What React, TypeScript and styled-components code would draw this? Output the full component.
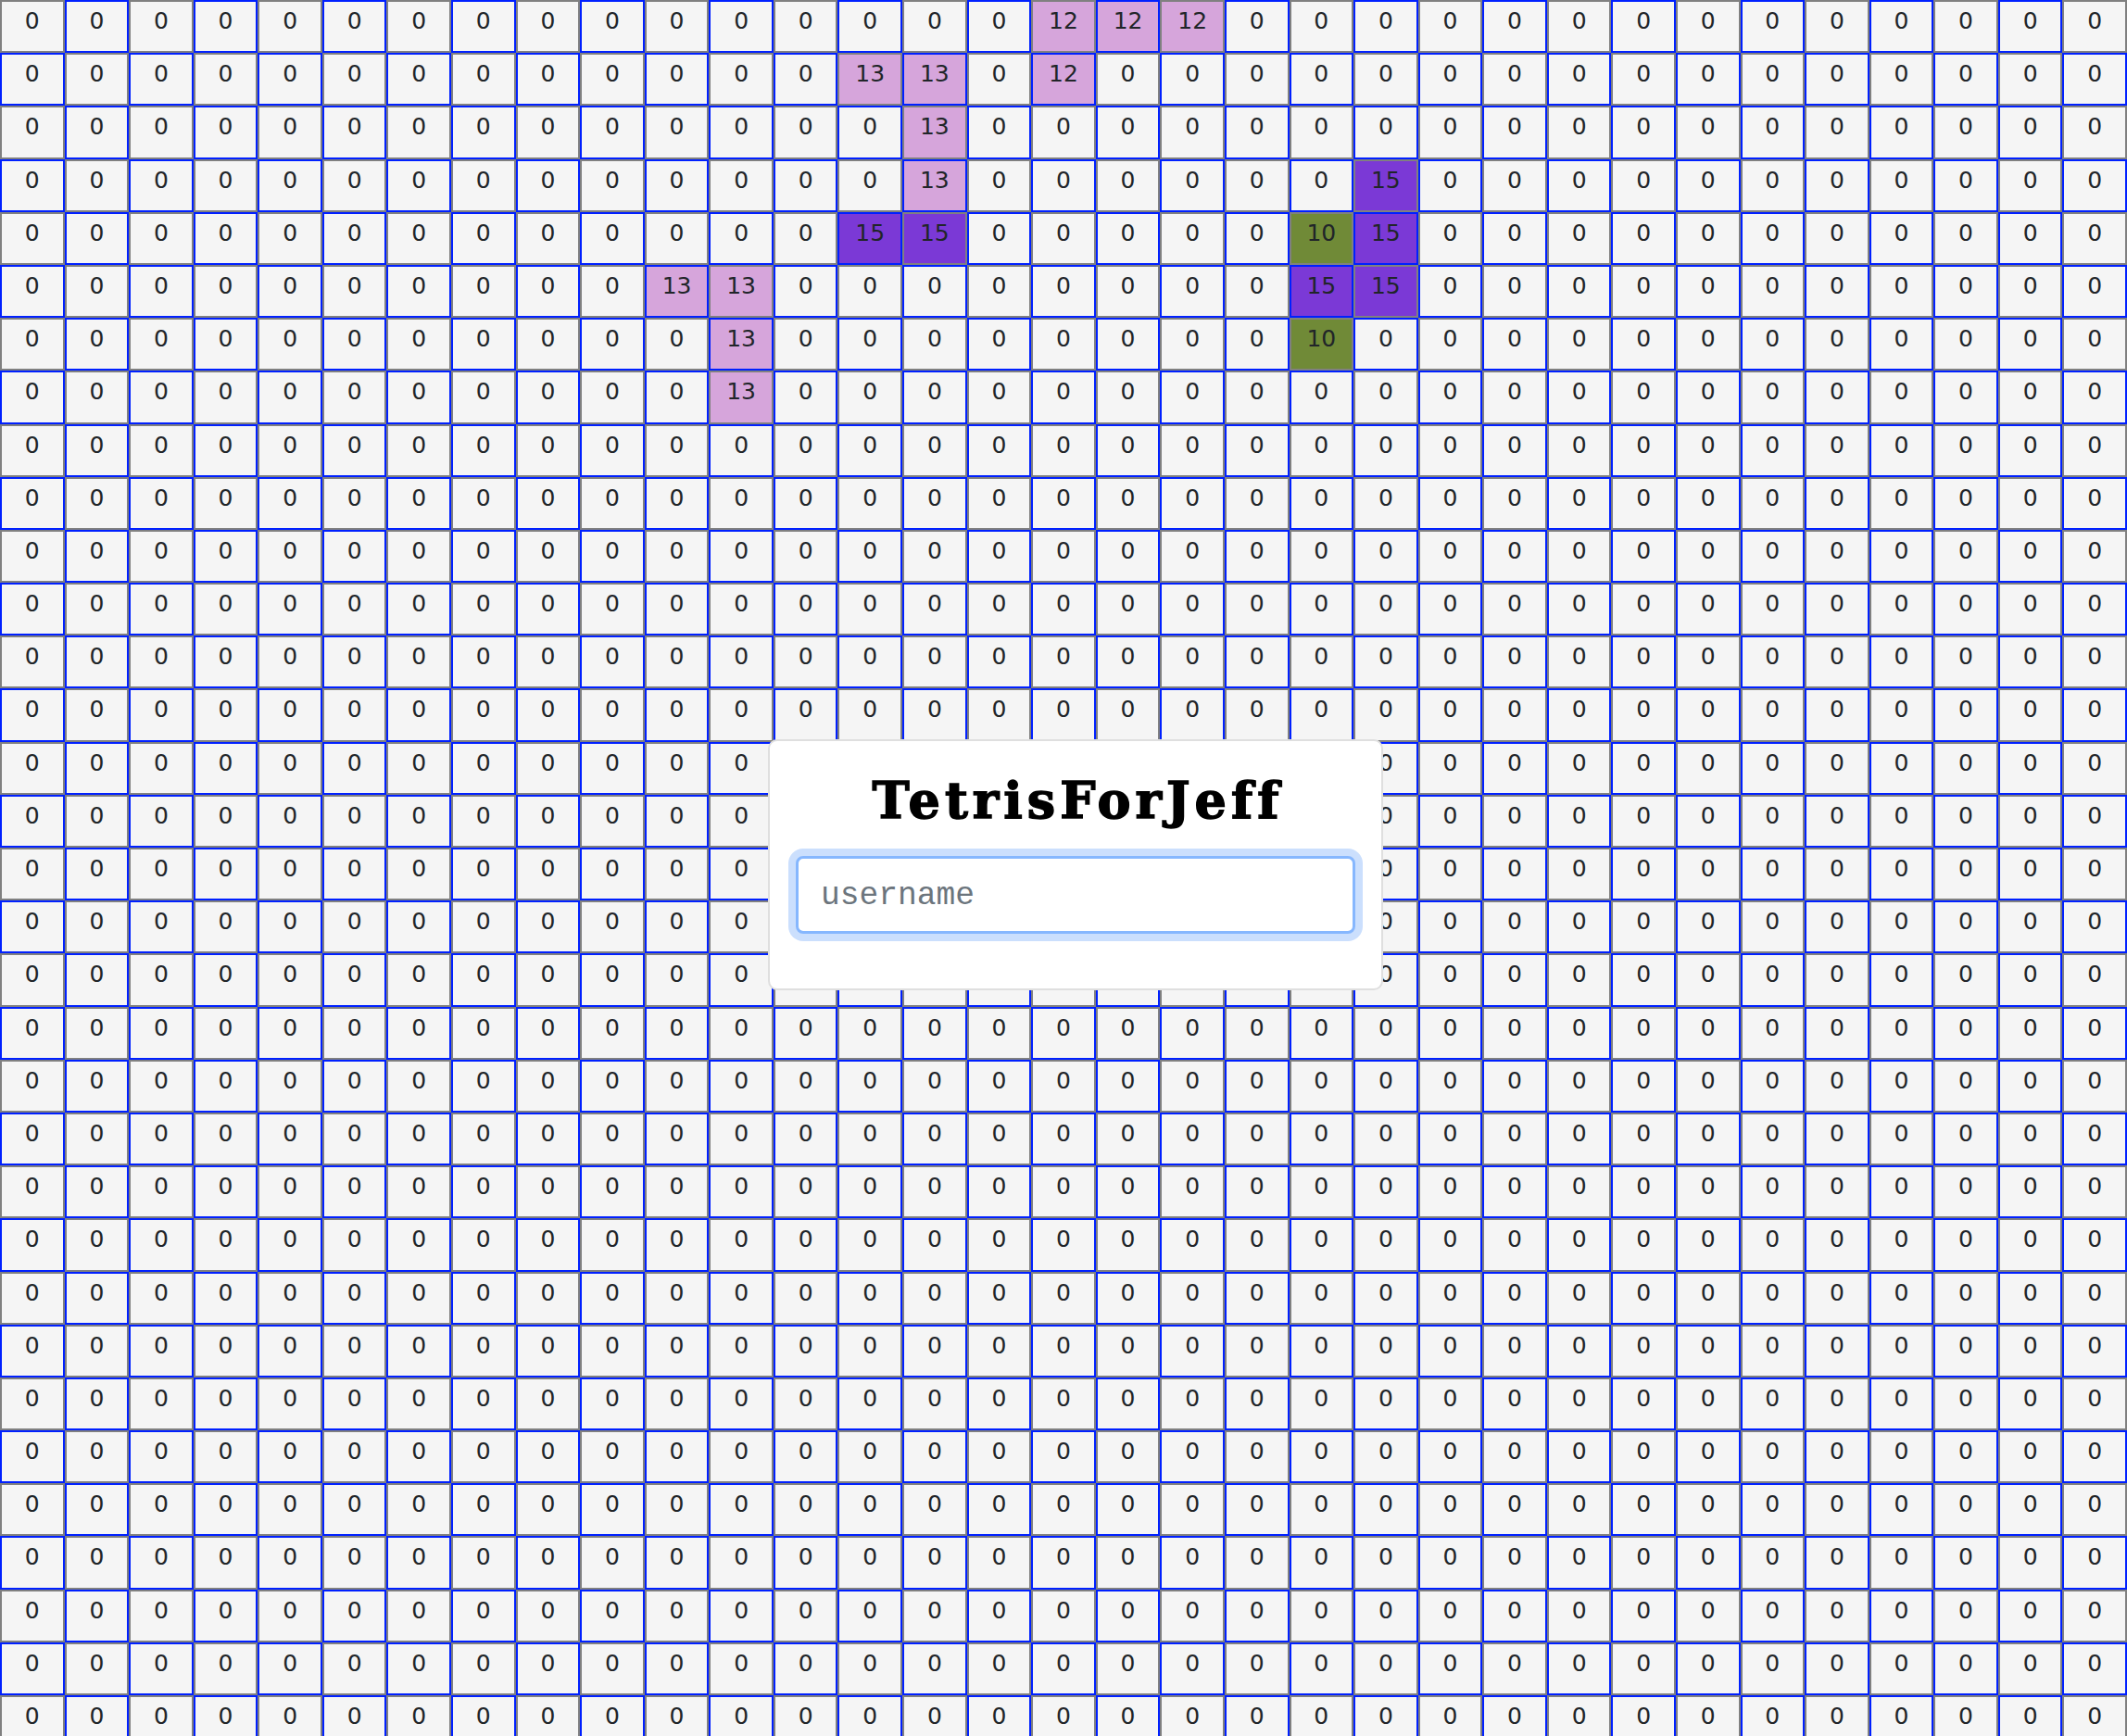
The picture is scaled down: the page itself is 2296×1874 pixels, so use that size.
import React from "react";
import styled, { createGlobalStyle } from "styled-components";

const COLS = 33;
const ROWS = 33;

const pieces: Record<string, number> = {
  "0,16": 12, "0,17": 12, "0,18": 12,
  "1,13": 13, "1,14": 13, "1,16": 12,
  "2,14": 13,
  "3,14": 13, "3,21": 15,
  "4,13": 15, "4,14": 15, "4,20": 10, "4,21": 15,
  "5,10": 13, "5,11": 13, "5,20": 15, "5,21": 15,
  "6,11": 13, "6,20": 10,
  "7,11": 13,
};

const colours: Record<number, string> = {
  0: "#f5f5f5",
  10: "#708a37",
  12: "#d6a5db",
  13: "#d6a5db",
  15: "#7b39d6",
};

const GlobalStyle = createGlobalStyle`
  html, body {
    margin: 0;
    padding: 0;
    overflow: hidden;
    background: #fff;
  }
  * {
    box-sizing: border-box;
  }
`;

const Page = styled.div`
  position: relative;
  width: 2296px;
  height: 1874px;
  overflow: hidden;
`;

const Board = styled.div`
  display: grid;
  grid-template-columns: repeat(${COLS}, 1fr);
  grid-auto-rows: 57.2px;
  width: 100%;
`;

const Cell = styled.div<{ $even: boolean; $value: number }>`
  border: 2px solid ${(p) => (p.$even ? "#808080" : "#0020ff")};
  background: ${(p) => colours[p.$value]};
  color: #212529;
  font-family: "DejaVu Sans", Verdana, sans-serif;
  font-size: 25px;
  line-height: 42px;
  text-align: center;
`;

const Card = styled.div`
  position: absolute;
  left: 829px;
  top: 798px;
  width: 664px;
  height: 271px;
  padding: 33px 28px 0;
  background: #fff;
  border: 2px solid #dfdfdf;
  border-radius: 10px;
`;

const Title = styled.h1`
  margin: 0 0 29px;
  padding-left: 5px;
  color: #000;
  font-family: "DejaVu Serif", "Liberation Mono", serif;
  font-size: 54px;
  font-weight: 700;
  letter-spacing: 5px;
  line-height: 62px;
  text-align: center;
  -webkit-text-stroke: 1.5px #000;
`;

const UsernameInput = styled.input`
  display: block;
  width: 604px;
  height: 84px;
  padding: 0 24px;
  background: #fff;
  border: 3px solid #86b7fe;
  border-radius: 8px;
  box-shadow: 0 0 0 8px #cbdffd;
  color: #212529;
  font-family: "Liberation Mono", "Courier New", monospace;
  font-size: 34.6px;
  outline: none;

  &::placeholder {
    color: #6c757d;
    opacity: 1;
  }
`;

export default function App() {
  const cells = [];
  for (let r = 0; r < ROWS; r++) {
    for (let c = 0; c < COLS; c++) {
      const value = pieces[`${r},${c}`] ?? 0;
      cells.push(
        <Cell key={`${r}-${c}`} $even={(r + c) % 2 === 0} $value={value}>
          {value}
        </Cell>
      );
    }
  }

  return (
    <Page>
      <GlobalStyle />
      <Board>{cells}</Board>
      <Card>
        <Title>TetrisForJeff</Title>
        <UsernameInput placeholder="username" />
      </Card>
    </Page>
  );
}
